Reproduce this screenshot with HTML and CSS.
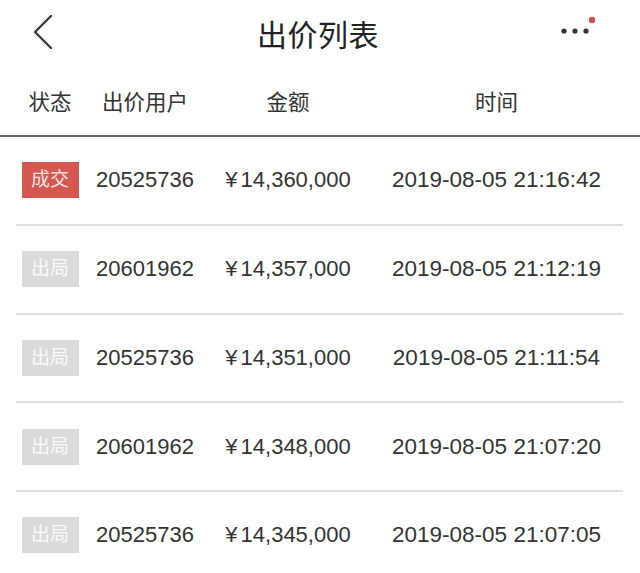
FILE: index.html
```html
<!DOCTYPE html>
<html lang="zh-CN">
<head>
  <meta charset="UTF-8">
  <title>出价列表</title>
  <link rel="stylesheet" href="styles.css">
</head>
<body>
  <!-- 顶部导航 -->
  <header class="nav">
    <svg class="nav-back" viewBox="0 0 20 34" width="20" height="34">
      <polyline points="17,1 1,17 17,33" />
    </svg>
    <h1 class="nav-title">出价列表</h1>
    <svg class="nav-more" viewBox="0 0 40 24" width="40" height="24">
      <circle cx="6" cy="17" r="2.6" fill="#333" />
      <circle cx="17" cy="17" r="2.6" fill="#333" />
      <circle cx="28" cy="17" r="2.6" fill="#333" />
      <circle cx="34" cy="6" r="3.2" fill="#c9535c" />
    </svg>
  </header>

  <!-- 表头 -->
  <div class="thead">
    <span>状态</span>
    <span>出价用户</span>
    <span>金额</span>
    <span>时间</span>
  </div>

  <!-- 出价记录 -->
  <ul class="list">
    <li class="row">
      <span><em class="tag deal">成交</em></span>
      <span class="num">20525736</span>
      <span class="num"><i class="yen">¥</i>14,360,000</span>
      <span class="num time">2019-08-05 21:16:42</span>
    </li>
    <li class="row">
      <span><em class="tag out">出局</em></span>
      <span class="num">20601962</span>
      <span class="num"><i class="yen">¥</i>14,357,000</span>
      <span class="num time">2019-08-05 21:12:19</span>
    </li>
    <li class="row">
      <span><em class="tag out">出局</em></span>
      <span class="num">20525736</span>
      <span class="num"><i class="yen">¥</i>14,351,000</span>
      <span class="num time">2019-08-05 21:11:54</span>
    </li>
    <li class="row">
      <span><em class="tag out">出局</em></span>
      <span class="num">20601962</span>
      <span class="num"><i class="yen">¥</i>14,348,000</span>
      <span class="num time">2019-08-05 21:07:20</span>
    </li>
    <li class="row">
      <span><em class="tag out">出局</em></span>
      <span class="num">20525736</span>
      <span class="num"><i class="yen">¥</i>14,345,000</span>
      <span class="num time">2019-08-05 21:07:05</span>
    </li>
  </ul>
</body>
</html>
```

FILE: styles.css
```css
/* 全体 */
html, body { margin: 0; padding: 0; background: #fff; overflow: hidden; }
body { font-family: "Liberation Sans", "Noto Sans CJK SC", sans-serif; color: #333; }

/* 导航栏 */
.nav { height: 65px; display: flex; align-items: center; justify-content: space-between; padding: 0 30px 0 34px; }
.nav-back { margin-top: -2px; }
.nav-back polyline { fill: none; stroke: #333; stroke-width: 2.2; stroke-linecap: round; stroke-linejoin: round; }
.nav-title { margin: 0 0 0 24px; font-size: 30px; font-weight: 400; color: #222; letter-spacing: 0.5px; }
.nav-more { margin-bottom: 13px; margin-right: 12px; }

/* 表头 + 列表共用列 */
.thead, .row { display: grid; grid-template-columns: 68px 122px 164px 253px; align-items: center; }
.thead, .row > span { text-align: center; }
.thead { height: 70px; padding-left: 16px; font-size: 21.5px; color: #333; border-bottom: 2px solid #666; }
.thead span { text-align: center; }

.list { list-style: none; margin: 0 17px 0 16px; padding: 0; }
.row { height: 86.75px; border-bottom: 2px solid #dedede; }
.row:last-child { border-bottom: none; }

.num { font-size: 22px; color: #333; white-space: nowrap; }
.time { font-size: 22.5px; }
.yen { font-style: normal; margin-right: 3px; }

/* 状态标签 */
.tag { display: inline-block; width: 57px; height: 36px; line-height: 36px; font-style: normal; font-size: 19px; text-align: center; }
.deal { background: #d5574f; color: #fbe3e2; }
.out { background: #dadada; color: #fafafa; }
```
